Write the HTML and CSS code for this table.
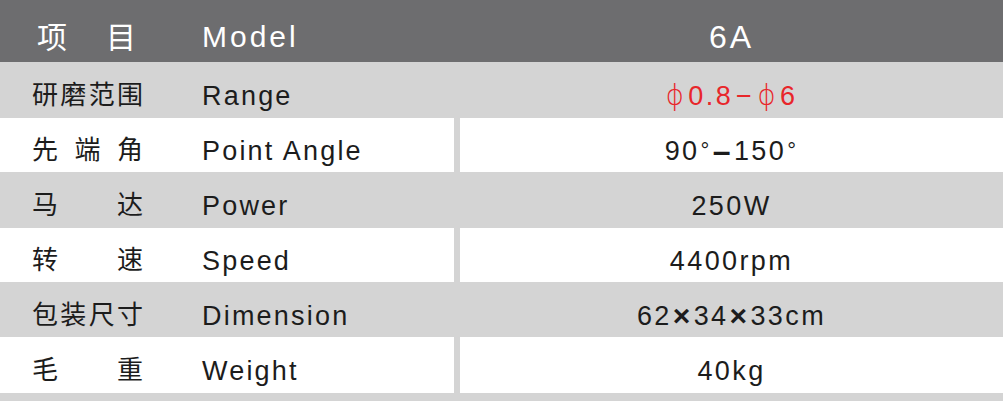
FILE: index.html
```html
<!DOCTYPE html>
<html lang="zh-CN">
<head>
<meta charset="utf-8">
<title>6A 参数表</title>
<link rel="stylesheet" href="styles.css">
</head>
<body>
<div class="spec">
  <div class="row head">
    <div class="key key-head">
      <span class="cn cn-head"><span>项</span><span>目</span></span>
      <span class="en">Model</span>
    </div>
    <div class="val val-head">6A</div>
  </div>
  <div class="row gray">
    <div class="key">
      <span class="cn"><span>研</span><span>磨</span><span>范</span><span>围</span></span>
      <span class="en">Range</span>
    </div>
    <div class="val red"><span class="phi">ϕ</span>0.8<span class="minus">−</span><span class="phi">ϕ</span>6</div>
  </div>
  <div class="row white">
    <div class="key">
      <span class="cn"><span>先</span><span>端</span><span>角</span></span>
      <span class="en">Point Angle</span>
    </div>
    <div class="val">90<sup class="deg">°</sup><b class="dash">–</b>150<sup class="deg">°</sup></div>
  </div>
  <div class="row gray">
    <div class="key">
      <span class="cn"><span>马</span><span>达</span></span>
      <span class="en">Power</span>
    </div>
    <div class="val">250W</div>
  </div>
  <div class="row white">
    <div class="key">
      <span class="cn"><span>转</span><span>速</span></span>
      <span class="en">Speed</span>
    </div>
    <div class="val">4400rpm</div>
  </div>
  <div class="row gray">
    <div class="key">
      <span class="cn"><span>包</span><span>装</span><span>尺</span><span>寸</span></span>
      <span class="en">Dimension</span>
    </div>
    <div class="val">62<b class="times">×</b>34<b class="times">×</b>33cm</div>
  </div>
  <div class="row white">
    <div class="key">
      <span class="cn"><span>毛</span><span>重</span></span>
      <span class="en">Weight</span>
    </div>
    <div class="val">40kg</div>
  </div>
</div>
</body>
</html>
```
FILE: styles.css
```css
html, body {
  margin: 0;
  padding: 0;
}
body {
  background: #d4d4d4;
  width: 1003px;
  height: 401px;
  overflow: hidden;
  font-family: "Liberation Sans", "Noto Sans CJK SC", sans-serif;
  color: #1c1c1c;
}
.spec {
  display: grid;
  grid-template-rows: 62px 56px 54px 56px 54px 55px 56px;
}
.row {
  display: grid;
  grid-template-columns: 454px 1fr;
  column-gap: 6px;
}
.head {
  background: #6d6d6f;
  color: #ffffff;
}
.gray .key, .gray .val {
  background: #d4d4d4;
}
.white .key, .white .val {
  background: #ffffff;
}
.key {
  display: grid;
  grid-template-columns: 111px 1fr;
  column-gap: 59px;
  align-items: center;
  padding-left: 32px;
  padding-top: 12px;
}
.key-head {
  grid-template-columns: 99px 1fr;
  column-gap: 66px;
  padding-left: 37px;
}
.cn {
  display: flex;
  justify-content: space-between;
  font-family: "Noto Sans CJK SC", sans-serif;
  font-size: 26px;
  line-height: 30px;
  margin-top: -6px;
}
.cn-head {
  font-size: 30px;
  line-height: 34px;
  margin-top: -4px;
}
.en {
  font-size: 27px;
  line-height: 30px;
  letter-spacing: 2.2px;
}
.key-head .en {
  font-size: 30px;
  letter-spacing: 3px;
}
.val {
  display: flex;
  align-items: center;
  justify-content: center;
  padding-top: 12px;
  font-size: 27px;
  line-height: 30px;
  letter-spacing: 2.4px;
}
.val-head {
  font-size: 32px;
  letter-spacing: 3px;
}
.red {
  color: #e8262a;
}
.phi {
  font-family: "DejaVu Sans", sans-serif;
  font-weight: 300;
  font-size: 28px;
  margin-right: 2px;
}
.minus {
  margin: 0 3px;
}
.deg {
  font-size: 22px;
  line-height: 0;
  vertical-align: 6px;
  margin-left: 1px;
}
.dash {
  font-weight: bold;
  font-size: 32px;
  margin: 0 1px;
}
.times {
  font-weight: bold;
  font-size: 30px;
  margin: 0 1px;
}
```
